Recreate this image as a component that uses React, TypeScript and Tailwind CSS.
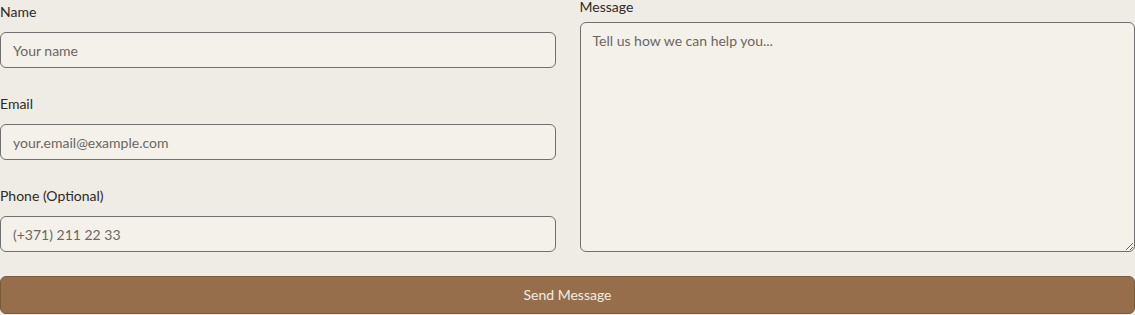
import React from 'react';

const inputCls =
  'block w-full h-9 rounded-md border border-[#707070] bg-[#f4f1eb] px-3 text-sm text-[#3a3632] placeholder:text-[#6b6661] outline-none';

function Field({ label, placeholder, type = 'text' }: { label: string; placeholder: string; type?: string }) {
  return (
    <div>
      <label className="block text-sm leading-5 text-[#2e2a26] mb-2.5">{label}</label>
      <input type={type} placeholder={placeholder} className={inputCls} />
    </div>
  );
}

export default function App() {
  return (
    <div
      className="w-[1135px] h-[315px] bg-[#efebe5] overflow-hidden"
      style={{ fontFamily: 'Lato, "Open Sans", sans-serif' }}
    >
      <form onSubmit={(e) => e.preventDefault()}>
        <div className="grid grid-cols-2 gap-6">
          <div className="flex flex-col gap-[26px] pt-0.5">
            <Field label="Name" placeholder="Your name" />
            <Field label="Email" placeholder="your.email@example.com" type="email" />
            <Field label="Phone (Optional)" placeholder="(+371) 211 22 33" type="tel" />
          </div>
          <div className="flex flex-col">
            <label className="block text-sm leading-[14px] text-[#2e2a26] mb-2">Message</label>
            <textarea
              placeholder="Tell us how we can help you..."
              className="block w-full h-[230px] rounded-md border border-[#707070] bg-[#f4f1eb] px-3 py-2 text-sm leading-5 text-[#3a3632] placeholder:text-[#6b6661] outline-none"
            />
          </div>
        </div>
        <button
          type="submit"
          className="mt-6 w-full h-[38px] rounded-md border border-[#7b5a3a] bg-[#966e4b] text-sm text-[#f3ece2]"
        >
          Send Message
        </button>
      </form>
    </div>
  );
}
